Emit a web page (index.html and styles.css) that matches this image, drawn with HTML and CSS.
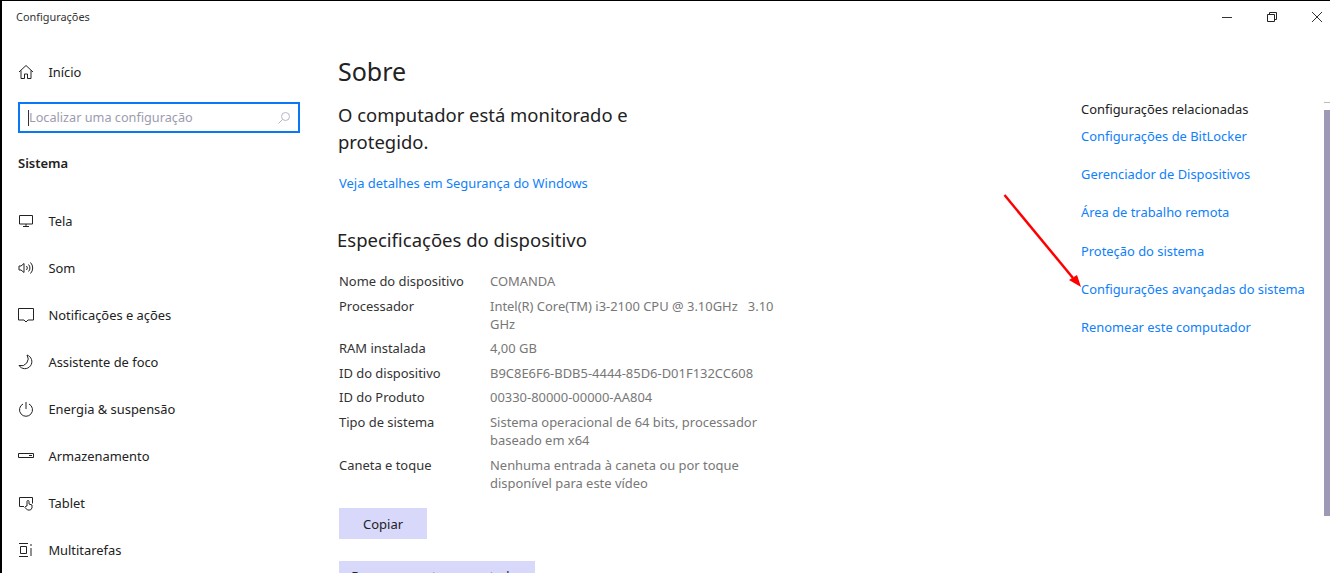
FILE: index.html
```html
<!DOCTYPE html>
<html lang="pt-BR">
<head>
<meta charset="utf-8">
<title>Configurações</title>
<link rel="stylesheet" href="styles.css">
</head>
<body>
<div class="window">
  <header class="titlebar">
    <span class="app-title">Configurações</span>
    <div class="controls">
      <svg class="ctl" width="12" height="12" viewBox="0 0 12 12"><path d="M1 6.500h10" stroke="#333" fill="none"/></svg>
      <svg class="ctl" width="12" height="12" viewBox="0 0 12 12"><path d="M1.500 3.500h7v7h-7zM3.500 3.500v-2h7v7h-2" stroke="#222" fill="none"/></svg>
      <svg class="ctl" width="12" height="12" viewBox="0 0 12 12"><path d="M1 1l10 10M11 1L1 11" stroke="#333" fill="none"/></svg>
    </div>
  </header>
  <div class="content">
    <nav class="sidebar">
      <a class="nav-item home">
        <svg class="ico" width="16" height="16" viewBox="0 0 16 16"><path d="M1 8l7-6.500L15 8M3 6.500V14.500h3.500V10h3v4.500H13V6.500" stroke="#222" fill="none"/></svg>
        <span>Início</span>
      </a>
      <div class="search">
        <span class="caret"></span>
        <span class="placeholder">Localizar uma configuração</span>
        <svg width="14" height="14" viewBox="0 0 14 14"><circle cx="8.500" cy="5.500" r="4" stroke="#b5b5c8" fill="none"/><path d="M5.500 8.500L1.500 12.500" stroke="#b5b5c8" fill="none"/></svg>
      </div>
      <h2 class="section">Sistema</h2>
      <ul class="menu">
        <li class="nav-item"><svg class="ico" width="16" height="16" viewBox="0 0 16 16"><path d="M1.500 2.500h13v8.500h-13zM8 11v3M5 13.500h6" stroke="#222" fill="none"/></svg><span>Tela</span></li>
        <li class="nav-item"><svg class="ico" width="16" height="16" viewBox="0 0 16 16"><path d="M1 6h2l3-2.500v9L3 10H1zM8.500 6a3 3 0 0 1 0 4M10.500 4.500a5 5 0 0 1 0 7M12.500 2.500a8 8 0 0 1 0 11" stroke="#222" fill="none"/></svg><span>Som</span></li>
        <li class="nav-item"><svg class="ico" width="16" height="16" viewBox="0 0 16 16"><path d="M.5 1.500h15v11.500h-5.500L8 15l-2-2H.5z" stroke="#222" fill="none"/></svg><span>Notificações e ações</span></li>
        <li class="nav-item"><svg class="ico" width="16" height="16" viewBox="0 0 16 16"><path d="M9 1a7 7 0 0 1-8 10.500A7 7 0 1 0 9 1z" stroke="#222" fill="none"/></svg><span>Assistente de foco</span></li>
        <li class="nav-item"><svg class="ico" width="16" height="16" viewBox="0 0 16 16"><path d="M8 1v7M5 3a6.500 6.500 0 1 0 6 0" stroke="#222" fill="none"/></svg><span>Energia &amp; suspensão</span></li>
        <li class="nav-item"><svg class="ico" width="16" height="16" viewBox="0 0 16 16"><path d="M.5 5.500h15v4H.5zM11 7.500h3" stroke="#222" fill="none"/></svg><span>Armazenamento</span></li>
        <li class="nav-item"><svg class="ico" width="16" height="16" viewBox="0 0 16 16"><path d="M6 11.500H1.500v-9h13v6M9 11V6.500a1 1 0 0 1 2 0V9l3 1v3l-1.500 2h-3L7 12.500l1-1.500z" stroke="#222" fill="none"/></svg><span>Tablet</span></li>
        <li class="nav-item"><svg class="ico" width="16" height="16" viewBox="0 0 16 16"><path d="M1 1.500h9M1 14.500h9M2.500 4.500h6v7h-6zM13 2v2M13 6v8" stroke="#222" fill="none"/></svg><span>Multitarefas</span></li>
      </ul>
    </nav>
    <main class="main">
      <h1 class="page-title">Sobre</h1>
      <p class="status">O computador está monitorado e protegido.</p>
      <a class="link details">Veja detalhes em Segurança do Windows</a>
      <h2 class="sub-title">Especificações do dispositivo</h2>
      <dl class="specs">
        <dt>Nome do dispositivo</dt><dd>COMANDA</dd>
        <dt>Processador</dt><dd>Intel(R) Core(TM) i3-2100 CPU @ 3.10GHz &nbsp; 3.10 GHz</dd>
        <dt>RAM instalada</dt><dd>4,00 GB</dd>
        <dt>ID do dispositivo</dt><dd>B9C8E6F6-BDB5-4444-85D6-D01F132CC608</dd>
        <dt>ID do Produto</dt><dd>00330-80000-00000-AA804</dd>
        <dt>Tipo de sistema</dt><dd>Sistema operacional de 64 bits, processador baseado em x64</dd>
        <dt>Caneta e toque</dt><dd>Nenhuma entrada à caneta ou por toque disponível para este vídeo</dd>
      </dl>
      <button class="btn copy">Copiar</button>
      <button class="btn rename">Renomear este computador</button>
    </main>
    <aside class="related">
      <h3 class="related-title">Configurações relacionadas</h3>
      <a class="link rel">Configurações de BitLocker</a>
      <a class="link rel">Gerenciador de Dispositivos</a>
      <a class="link rel">Área de trabalho remota</a>
      <a class="link rel">Proteção do sistema</a>
      <a class="link rel">Configurações avançadas do sistema</a>
      <a class="link rel">Renomear este computador</a>
    </aside>
  </div>
  <div class="scroll-arrow"></div>
  <div class="scrollbar"></div>
  <svg class="annotation" width="90" height="110" viewBox="0 0 90 110"><path d="M2.500 1L71 84" stroke="#f00" stroke-width="2.500" fill="none"/><path d="M79 93L67 86L75 81z" fill="#f00"/></svg>
</div>
</body>
</html>
```
FILE: styles.css
```css
* { box-sizing: border-box; }
html, body { margin: 0; height: 100%; overflow: hidden; }
body { font-family: "Noto Sans", "Open Sans", sans-serif; color: #222; background: #fff; }
.window {
  position: relative;
  width: 1330px;
  height: 573px;
  overflow: hidden;
  border-top: 1px solid #000;
  border-left: 2px solid #000;
  background: #fff;
}
.titlebar { display: flex; justify-content: space-between; height: 32px; padding: 9px 7px 0 14px; }
.app-title { font-size: 10.900px; line-height: 13px; color: #333; }
.controls { display: flex; gap: 33px; padding-top: 1px; }
.ctl { display: block; }
.content { display: flex; align-items: flex-start; }
.sidebar { width: 336px; flex: none; padding: 27px 0 0 16px; }
.nav-item { display: flex; align-items: center; height: 24px; font-size: 12.900px; list-style: none; color: #222; }
.nav-item .ico { flex: none; margin-right: 14.400px; }
.menu { margin: 37px 0 0; padding: 0; display: flex; flex-direction: column; gap: 23px; }
.search {
  display: flex;
  align-items: center;
  width: 282px;
  height: 31px;
  margin-top: 18px;
  padding: 0 7px 0 8px;
  border: 2px solid #0a78f5;
}
.caret { width: 1px; height: 16px; background: #333; flex: none; }
.placeholder { flex: 1; font-size: 12.700px; line-height: 14px; padding-bottom: 2px; color: #9c9caf; white-space: nowrap; }
.section { margin: 21px 0 0; font-size: 13px; font-weight: 600; line-height: 18px; color: #222; }
.main { width: 440px; flex: none; }
.page-title { margin: 20px 0 0; font-size: 25px; font-weight: 400; line-height: 36px; color: #222; }
.status { width: 320px; margin: 12px 0 0; font-size: 18.450px; line-height: 27px; color: #222; }
.link { color: #0f7ffa; font-size: 12.900px; line-height: 18px; display: block; }
.details { margin: 19px 0 0 1px; font-size: 12.950px; }
.sub-title { margin: 34px 0 0 -1px; font-size: 18.500px; font-weight: 400; line-height: 28px; color: #222; }
.specs {
  display: grid;
  grid-template-columns: 151px 290px;
  margin: 18px 0 0 1px;
  row-gap: 6.600px;
  font-size: 12.950px;
  line-height: 18px;
}
.specs dt { color: #333; }
.specs dd { margin: 0; color: #777; }
.btn {
  display: block;
  height: 31px;
  border: 0;
  margin: 16px 0 0 1px;
  padding: 2px 0 0;
  font: inherit;
  font-size: 13px;
  color: #222;
  background: #d8d8fb;
}
.copy { width: 88px; }
.rename { width: 196px; margin-top: 22px; padding-top: 0; }
.related { padding-top: 67px; margin-left: 303px; width: 240px; flex: none; }
.related-title { margin: 0; font-size: 12.900px; font-weight: 400; line-height: 18px; color: #222; }
.rel { margin-top: 20.200px; white-space: nowrap; }
.related-title + .rel { margin-top: 9px; }
.scrollbar { position: absolute; right: 0; top: 109px; width: 6px; height: 406px; background: #9c9ab4; }
.scroll-arrow { position: absolute; right: 0; top: 99px; width: 6px; height: 3px; border-bottom: 1px solid #bbb; }
.annotation { position: absolute; left: 1000px; top: 193px; }
```
